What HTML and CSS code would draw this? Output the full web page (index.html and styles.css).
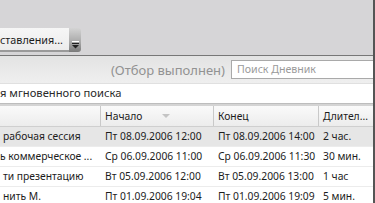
FILE: index.html
```html
<!DOCTYPE html>
<html>
<head>
<meta charset="utf-8">
<link rel="stylesheet" href="styles.css">
</head>
<body>
<div class="app">
  <div class="top">
    <div class="combo">
      <div class="combo-field">ставления...</div>
      <div class="combo-btn">
        <svg width="7" height="8" viewBox="0 0 7 8"><rect x="0" y="0" width="7" height="1" fill="#fff"/><rect x="0" y="2" width="7" height="1" fill="#222"/><path d="M0 4 H7 L3.5 7.5 Z" fill="#222"/></svg>
      </div>
    </div>
  </div>
  <div class="filterbar">
    <div class="filter-note">(Отбор выполнен)</div>
    <div class="search">Поиск Дневник</div>
  </div>
  <div class="instant">я мгновенного поиска</div>
  <div class="grid">
    <div class="row head">
      <div class="c c1"></div>
      <div class="c c2">Начало<span class="sort"></span></div>
      <div class="c c3">Конец</div>
      <div class="c c4">Длител...</div>
    </div>
    <div class="row sel">
      <div class="c c1">рабочая сессия</div>
      <div class="c c2">Пт 08.09.2006 12:00</div>
      <div class="c c3">Пт 08.09.2006 14:00</div>
      <div class="c c4">2 час.</div>
    </div>
    <div class="row">
      <div class="c c1 flush">ь коммерческое ...</div>
      <div class="c c2">Ср 06.09.2006 11:00</div>
      <div class="c c3">Ср 06.09.2006 11:30</div>
      <div class="c c4">30 мин.</div>
    </div>
    <div class="row">
      <div class="c c1">ти презентацию</div>
      <div class="c c2">Вт 05.09.2006 12:00</div>
      <div class="c c3">Вт 05.09.2006 13:00</div>
      <div class="c c4">1 час</div>
    </div>
    <div class="row">
      <div class="c c1">нить М.</div>
      <div class="c c2">Пт 01.09.2006 19:04</div>
      <div class="c c3">Пт 01.09.2006 19:09</div>
      <div class="c c4">5 мин.</div>
    </div>
  </div>
</div>
</body>
</html>
```
FILE: styles.css
```css
html, body {
  margin: 0;
  padding: 0;
  background: #ffffff;
}
body {
  width: 375px;
  height: 203px;
  overflow: hidden;
  font-family: "Noto Sans", "Open Sans", sans-serif;
  font-size: 10.3px;
  color: #1c1c1c;
}
.app {
  width: 375px;
  border-right: 2px solid #555;
  box-sizing: border-box;
  height: 203px;
}
.top {
  height: 56px;
  background: #d6d5d7;
  padding-top: 28px;
  box-sizing: border-box;
  border-bottom: 1px solid #777;
}
.combo {
  display: flex;
  height: 24px;
  width: 81px;
}
.combo-field {
  width: 69px;
  height: 24px;
  box-sizing: border-box;
  background: linear-gradient(#f6f6f6, #ececec);
  border-bottom: 2px solid #9a9a9a;
  font-size: 10.8px;
  line-height: 22px;
  padding-top: 1px;
  white-space: nowrap;
  overflow: hidden;
  color: #1c1c1c;
}
.combo-btn {
  width: 12px;
  height: 24px;
  background: linear-gradient(#d4d4d4, #a8a8a8 60%, #7a7a7a);
  border-radius: 0 3px 3px 0;
  display: flex;
  align-items: flex-end;
  justify-content: center;
  padding-bottom: 3px;
  box-sizing: border-box;
}
.filterbar {
  height: 27px;
  background: linear-gradient(#e3e3e3, #efefef);
  display: flex;
  align-items: center;
  border-bottom: 1px solid #e0e0e0;
}
.filter-note {
  width: 231px;
  text-align: right;
  padding-right: 6px;
  box-sizing: border-box;
  color: #929292;
  font-size: 13px;
}
.search {
  flex: 1;
  height: 19px;
  background: #fff;
  border: 1px solid #a9a9a9;
  border-right: none;
  box-sizing: border-box;
  color: #9a9a9a;
  font-size: 10.6px;
  line-height: 17px;
  padding-left: 5px;
}
.instant {
  height: 19px;
  line-height: 18px;
  font-size: 11.2px;
  color: #2a2a2a;
  white-space: nowrap;
  border-bottom: 1px solid #bdbdbd;
}
.grid {
  border-top: 2px solid #d4d4d4;
}
.row {
  display: flex;
  height: 19px;
  border-bottom: 1px solid #ececec;
  white-space: nowrap;
}
.row.head {
  height: 20px;
  background: linear-gradient(#fafafa, #ececec);
  border-bottom: 1px solid #cfcfcf;
}
.row.sel {
  background: #e6e6e6;
}
.c {
  box-sizing: border-box;
  line-height: 19px;
  overflow: hidden;
  padding-left: 4px;
  position: relative;
}
.head .c {
  line-height: 20px;
  border-right: 1px solid #c9c9c9;
}
.head .c4 { border-right: none; }
.c1 { width: 101px; padding-left: 3px; }
.c1.flush { padding-left: 0; }
.c2 { width: 113px; }
.c3 { width: 105px; }
.c4 { flex: 1; }
.sort {
  position: absolute;
  left: 61px;
  top: 8px;
  width: 0;
  height: 0;
  border-left: 4px solid transparent;
  border-right: 4px solid transparent;
  border-top: 4px solid #c4c4c4;
}
```
